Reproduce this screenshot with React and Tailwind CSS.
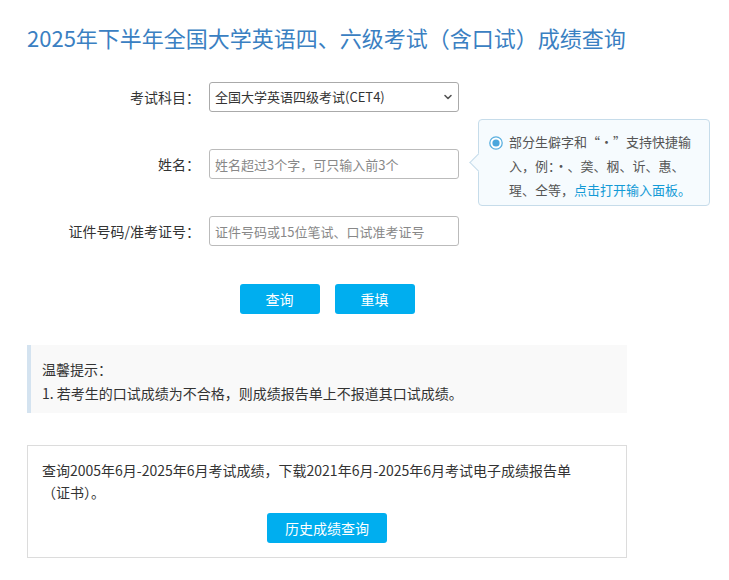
import React, { useState } from 'react';

const FONT = { fontFamily: '"Noto Sans CJK SC", "Noto Sans", sans-serif' };

function RadioDot() {
  return (
    <svg width="14" height="14" viewBox="0 0 14 14" className="absolute left-[10px] top-[16px]">
      <circle cx="7" cy="7" r="6.2" fill="#fff" stroke="#5aafdf" strokeWidth="1.3" />
      <circle cx="7" cy="7" r="3.6" fill="#4aa6dc" />
    </svg>
  );
}

function Chevron() {
  return (
    <svg width="10" height="10" viewBox="0 0 10 10" className="pointer-events-none absolute right-[6px] top-[10px]">
      <path d="M2 3.5 L5 6.5 L8 3.5" fill="none" stroke="#555" strokeWidth="1.6" strokeLinecap="round" strokeLinejoin="round" />
    </svg>
  );
}

export default function App() {
  const [name, setName] = useState('');
  const [idNo, setIdNo] = useState('');

  return (
    <div className="min-h-[580px] bg-white px-[27px] text-[#333]" style={FONT} lang="zh-CN">
      <h1 className="pt-[24px] text-[22px] leading-[26px] text-[#3a80c2]">
        2025年下半年全国大学英语四、六级考试（含口试）成绩查询
      </h1>

      <div className="mt-[32px] flex flex-col gap-[37px]">
        <div className="flex h-[30px] items-center">
          <label className="w-[173px] shrink-0 text-right text-[14px]">考试科目：</label>
          <div className="relative ml-[9px] w-[250px]">
            <select className="h-[30px] w-full appearance-none rounded-[3px] border border-[#aaa] bg-white pl-[5px] text-[13px] text-[#333] outline-none">
              <option>全国大学英语四级考试(CET4)</option>
              <option>全国大学英语六级考试(CET6)</option>
            </select>
            <Chevron />
          </div>
        </div>

        <div className="relative flex h-[30px] items-center">
          <label className="w-[173px] shrink-0 text-right text-[14px]">姓名：</label>
          <input
            value={name}
            onChange={(e) => setName(e.target.value)}
            placeholder="姓名超过3个字，可只输入前3个"
            className="ml-[9px] h-[30px] w-[250px] rounded-[3px] border border-[#bbb] px-[5px] text-[13px] outline-none placeholder:text-[#888]"
          />
          <div className="absolute left-[451px] top-[-30px] w-[232px] rounded-[4px] border border-[#c6dcea] bg-[#f6fbfe] pb-[3px] pl-[30px] pr-[8px] pt-[10px] text-[13px] leading-[24px] text-[#555]">
            <span className="absolute left-[-7px] top-[36px] h-[13px] w-[13px] rotate-45 border-b border-l border-[#c6dcea] bg-[#f6fbfe]"></span>
            <RadioDot />
            部分生僻字和“·”支持快捷输入，例：·、䶮、㭎、䜣、惠、瑆、仝等，<a href="#" className="text-[#139ad6]">点击打开输入面板。</a>
          </div>
        </div>

        <div className="flex h-[30px] items-center">
          <label className="w-[173px] shrink-0 text-right text-[14px]">证件号码/准考证号：</label>
          <input
            value={idNo}
            onChange={(e) => setIdNo(e.target.value)}
            placeholder="证件号码或15位笔试、口试准考证号"
            className="ml-[9px] h-[30px] w-[250px] rounded-[3px] border border-[#bbb] px-[5px] text-[13px] outline-none placeholder:text-[#888]"
          />
        </div>
      </div>

      <div className="mt-[38px] flex w-[600px] justify-center gap-[15px]">
        <button className="h-[30px] w-[80px] rounded-[3px] bg-[#00aeef] text-[14px] text-white">查询</button>
        <button className="h-[30px] w-[80px] rounded-[3px] bg-[#00aeef] text-[14px] text-white">重填</button>
      </div>

      <div className="mt-[31px] w-[600px] border-l-4 border-[#d4e3f0] bg-[#f9f9f9] pb-[8px] pl-[11px] pt-[12px] text-[14px] leading-[24px]">
        <p>温馨提示：</p>
        <p>1. 若考生的口试成绩为不合格，则成绩报告单上不报道其口试成绩。</p>
      </div>

      <div className="mt-[32px] w-[600px] border border-[#dcdcdc] px-[14px] pb-[14px] pt-[13px] text-[14px] leading-[22px]">
        <p>
          查询2005年6月-2025年6月考试成绩，下载2021年6月-2025年6月考试电子成绩报告单
          <br />
          （证书）。
        </p>
        <div className="mt-[10px] flex justify-center">
          <button className="h-[30px] w-[120px] rounded-[3px] bg-[#00aeef] text-[14px] text-white">历史成绩查询</button>
        </div>
      </div>
    </div>
  );
}
